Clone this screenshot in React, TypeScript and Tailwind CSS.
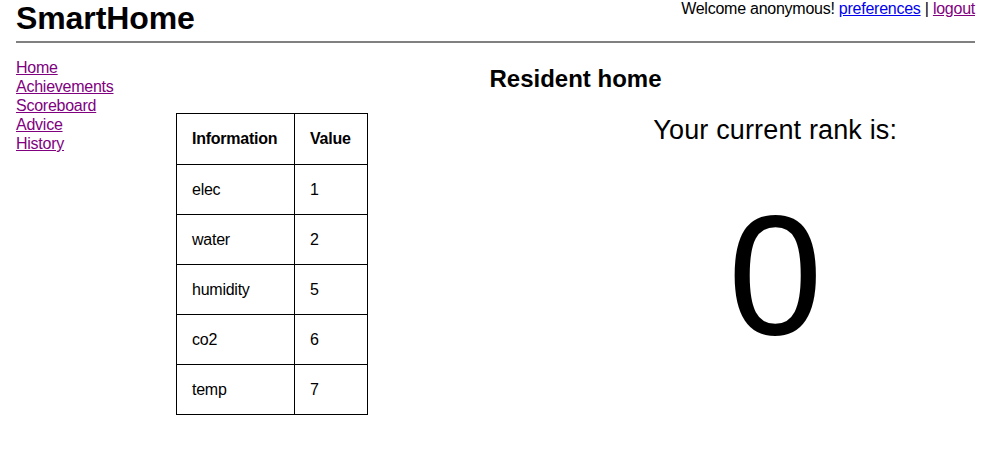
import React from "react";

const rows: [string, string][] = [
  ["elec", "1"],
  ["water", "2"],
  ["humidity", "5"],
  ["co2", "6"],
  ["temp", "7"],
];

export default function App() {
  return (
    <div className="px-4 bg-white text-black text-[16px] tracking-[-0.25px] font-['Liberation_Sans',Arial,sans-serif] min-h-[461px]">
      <header className="flex justify-between items-start h-[43px] border-b-2 border-[#808080]">
        <h1 className="text-[32px] font-bold leading-[37px] m-0 tracking-[-0.1px]">SmartHome</h1>
        <div className="leading-[18px]">
          Welcome anonymous!{" "}
          <a href="#" className="text-[#0000ee] underline">preferences</a>
          {" | "}
          <a href="#" className="text-[#800080] underline">logout</a>
        </div>
      </header>
      <div className="flex mt-[15px]">
        <nav className="w-[160px] flex flex-col items-start leading-[19px]">
          {["Home", "Achievements", "Scoreboard", "Advice", "History"].map((l) => (
            <a key={l} href="#" className="text-[#800080] underline">
              {l}
            </a>
          ))}
        </nav>
        <main className="flex-1">
          <h2 className="text-center text-[24px] font-bold leading-[28px] mt-[7px] tracking-normal">Resident home</h2>
          <div className="grid grid-cols-2 mt-[20px]">
            <div>
              <div className="inline-grid grid-cols-[118px_73px] border-l border-t border-black">
                <div className="h-[51px] border-r border-b border-black pl-[15px] flex items-center font-bold">Information</div>
                <div className="h-[51px] border-r border-b border-black pl-[15px] flex items-center font-bold">Value</div>
                {rows.map(([k, v]) => (
                  <React.Fragment key={k}>
                    <div className="h-[50px] border-r border-b border-black pl-[15px] flex items-center">{k}</div>
                    <div className="h-[50px] border-r border-b border-black pl-[15px] flex items-center">{v}</div>
                  </React.Fragment>
                ))}
              </div>
            </div>
            <div className="text-center">
              <div className="text-[27px] leading-[31px] mt-[2px] tracking-[0.15px]">Your current rank is:</div>
              <div className="text-[170px] leading-none mt-[44px] tracking-normal">0</div>
            </div>
          </div>
        </main>
      </div>
    </div>
  );
}
